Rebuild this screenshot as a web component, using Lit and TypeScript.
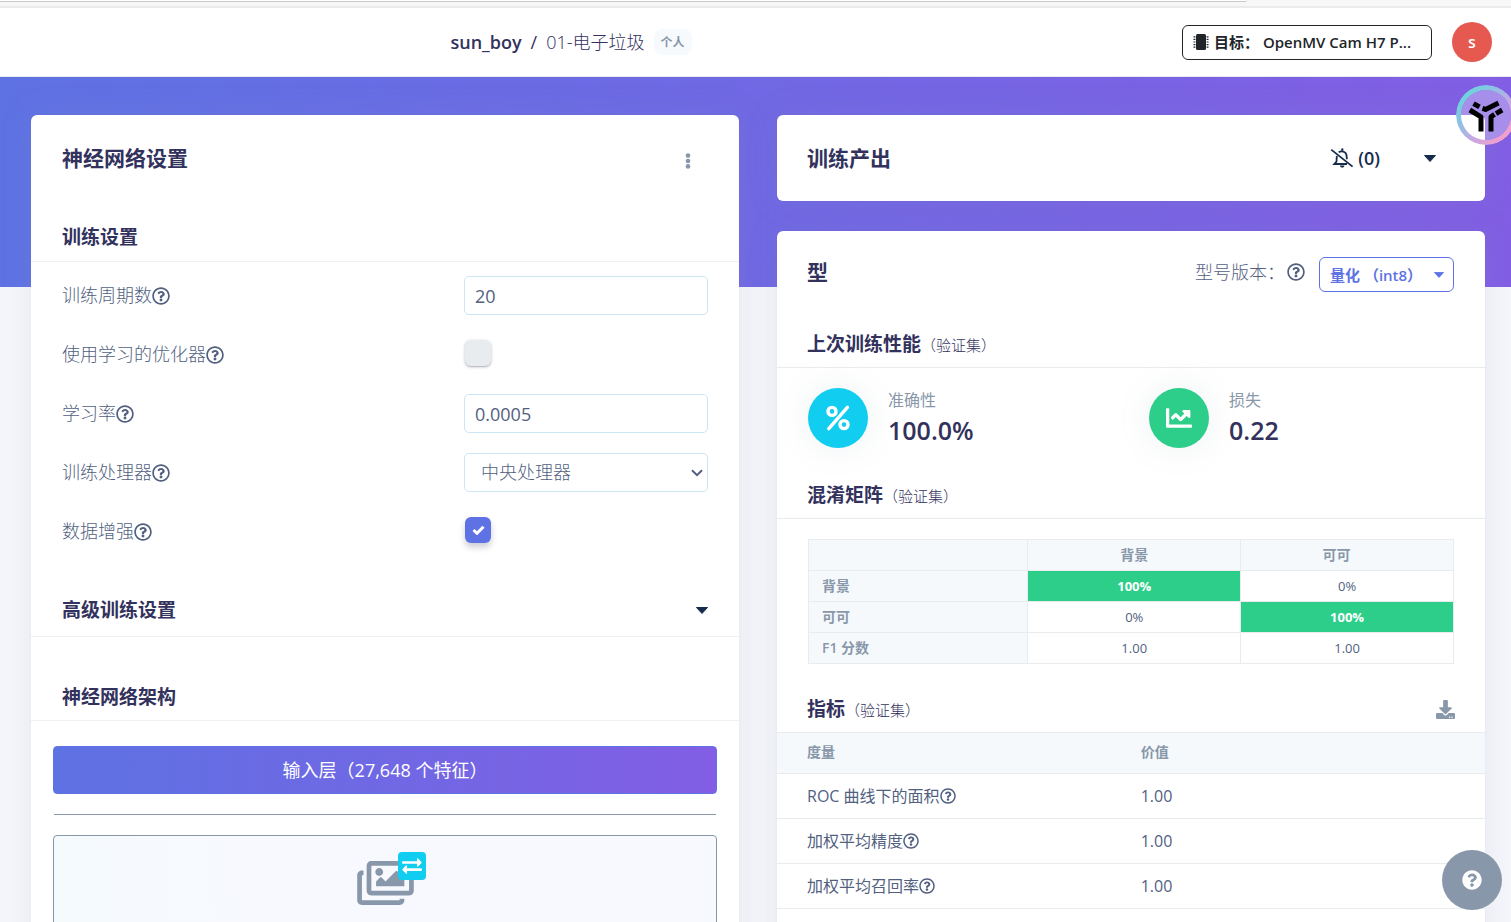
import { LitElement, html, css, svg } from "lit";
import { customElement, property, state } from "lit/decorators.js";

const HELP_PATH =
  "M256 8C119.043 8 8 119.083 8 256c0 136.997 111.043 248 248 248s248-111.003 248-248C504 119.083 392.957 8 256 8zm0 448c-110.532 0-200-89.431-200-200 0-110.495 89.472-200 200-200 110.491 0 200 89.471 200 200 0 110.53-89.431 200-200 200zm107.244-255.2c0 67.052-72.421 68.084-72.421 92.863V300c0 6.627-5.373 12-12 12h-45.647c-6.627 0-12-5.373-12-12v-8.659c0-35.745 27.1-50.034 47.579-61.516 17.561-9.845 28.324-16.541 28.324-29.579 0-17.246-21.999-28.693-39.784-28.693-23.189 0-33.894 10.977-48.942 29.969-4.057 5.12-11.46 6.071-16.666 2.124l-27.824-21.098c-5.107-3.872-6.251-11.066-2.644-16.363C184.846 131.491 214.94 112 261.794 112c49.071 0 101.45 38.304 101.45 88.8zM298 368c0 23.159-18.841 42-42 42s-42-18.841-42-42 18.841-42 42-42 42 18.841 42 42z";

const icons: Record<string, { box: string; body: unknown }> = {
  help: { box: "0 0 512 512", body: svg`<path d=${HELP_PATH} />` },
  helpSolid: {
    box: "0 0 512 512",
    body: svg`<path d="M504 256c0 136.997-111.043 248-248 248S8 392.997 8 256C8 119.083 119.043 8 256 8s248 111.083 248 248zM262.655 90c-54.497 0-89.255 22.957-116.549 63.758-3.536 5.286-2.353 12.415 2.715 16.258l34.699 26.31c5.205 3.947 12.621 3.008 16.665-2.122 17.864-22.658 30.113-35.797 57.303-35.797 20.429 0 45.698 13.148 45.698 32.958 0 14.976-12.363 22.667-32.534 33.976C247.128 238.528 216 254.941 216 296v4c0 6.627 5.373 12 12 12h56c6.627 0 12-5.373 12-12v-1.333c0-28.462 83.186-29.647 83.186-106.667 0-58.002-60.165-102-116.531-102zM256 338c-25.365 0-46 20.635-46 46 0 25.364 20.635 46 46 46s46-20.636 46-46c0-25.365-20.635-46-46-46z" />`,
  },
  images: {
    box: "0 32 576 448",
    body: svg`<path d="M480 416v16c0 26.51-21.49 48-48 48H48c-26.51 0-48-21.49-48-48V176c0-26.51 21.49-48 48-48h16v48H54a6 6 0 0 0-6 6v244a6 6 0 0 0 6 6h372a6 6 0 0 0 6-6v-10h48zm42-336H150a6 6 0 0 0-6 6v244a6 6 0 0 0 6 6h372a6 6 0 0 0 6-6V86a6 6 0 0 0-6-6zm6-48c26.51 0 48 21.49 48 48v256c0 26.51-21.49 48-48 48H144c-26.51 0-48-21.49-48-48V80c0-26.51 21.49-48 48-48h384zM264 144c0 22.091-17.909 40-40 40s-40-17.909-40-40 17.909-40 40-40 40 17.909 40 40zm-72 96l39.515-39.515c4.686-4.686 12.284-4.686 16.971 0L288 240l103.515-103.515c4.686-4.686 12.284-4.686 16.971 0L480 208v80H192v-48z" />`,
  },
  chart: {
    box: "0 0 512 512",
    body: svg`<path d="M496 384H64V80c0-8.84-7.16-16-16-16H16C7.16 64 0 71.16 0 80v336c0 17.67 14.33 32 32 32h464c8.84 0 16-7.16 16-16v-32c0-8.84-7.16-16-16-16zM464 96H345.94c-21.38 0-32.09 25.85-16.97 40.97l32.4 32.4L288 242.75l-73.37-73.37c-12.5-12.5-32.76-12.5-45.25 0l-68.69 68.69c-6.25 6.25-6.25 16.38 0 22.63l22.62 22.62c6.25 6.25 16.38 6.25 22.63 0L192 237.25l73.37 73.37c12.5 12.5 32.76 12.5 45.25 0l96-96 32.4 32.4c15.12 15.12 40.97 4.41 40.97-16.97V112c.01-8.84-7.15-16-15.99-16z" />`,
  },
  download: {
    box: "0 0 512 512",
    body: svg`<path d="M216 0h80c13.3 0 24 10.7 24 24v168h87.7c17.8 0 26.7 21.5 14.1 34.1L269.7 378.3c-7.5 7.5-19.8 7.5-27.3 0L90.1 226.1c-12.6-12.6-3.7-34.1 14.1-34.1H192V24c0-13.3 10.7-24 24-24zm296 376v112c0 13.3-10.7 24-24 24H24c-13.3 0-24-10.7-24-24V376c0-13.3 10.7-24 24-24h146.7l49 49c20.1 20.1 52.5 20.1 72.6 0l49-49H488c13.3 0 24 10.7 24 24zm-124 88c0-11-9-20-20-20s-20 9-20 20 9 20 20 20 20-9 20-20zm64 0c0-11-9-20-20-20s-20 9-20 20 9 20 20 20 20-9 20-20z" />`,
  },
  percent: {
    box: "0 0 24 26",
    body: svg`<g fill="none" stroke="currentColor" stroke-width="3.4" stroke-linecap="round"><path d="M21.4 2.4L2.8 23.6" /><circle cx="6" cy="6.4" r="4" /><circle cx="18" cy="19.6" r="4" /></g>`,
  },
  chip: {
    box: "0 0 16 16",
    body: svg`<rect x="3" y="0" width="10" height="16" rx="1.5" /><g stroke="currentColor" stroke-width="1.2"><path d="M.5 2.9H2.4M.5 5.4H2.4M.5 8H2.4M.5 10.6H2.4M.5 13.1H2.4M13.6 2.9h1.9M13.6 5.4h1.9M13.6 8h1.9M13.6 10.6h1.9M13.6 13.1h1.9" /></g>`,
  },
  bellOff: {
    box: "0 0 24 20",
    body: svg`<g fill="none" stroke="currentColor" stroke-width="1.8"><path d="M1.2 1.6L22.6 18.6" /><path d="M8.8 4.4C10.200 2.900 14 2.700 15.800 5.200c1.200 1.900 1 4.200 1 6" /><path d="M6.900 8c-.4 2-.2 3.800-.4 5.600L4.300 16H17" /></g><path d="M11.200 1.300a1.100 1.100 0 0 1 2.200 0v1.500h-2.200zM9.900 17.600h4.600a2.300 2.100 0 0 1-4.600 0z" />`,
  },
  dots: {
    box: "0 0 6 18",
    body: svg`<circle cx="3" cy="3.600" r="2.300" /><circle cx="3" cy="9" r="2.300" /><circle cx="3" cy="14.400" r="2.300" />`,
  },
  caret: { box: "0 0 12 7", body: svg`<path d="M.5.500h11L6 6.500z" stroke="currentColor" stroke-linejoin="round" />` },
  swap: {
    box: "0 0 20 16",
    body: svg`<path d="M1 3.200h14V.900q0-1.200 1-.4l3.400 3.500q.6.600 0 1.200L16 8.500q-1 .8-1-.4V5.800H1q-1 0-1-1V4.200q0-1 1-1zM19 10.300H5V8q0-1.200-1-.4L.6 11.100q-.6.600 0 1.200L4 15.600q1 .8 1-.4v-2.300h14q1 0 1-1v-.6q0-1-1-1z" />`,
  },
  tri: {
    box: "0 0 36 34",
    body: svg`<g fill="none" stroke="currentColor" stroke-width="5" stroke-linejoin="round"><path d="M5.500 5.600L11.500 8.900" /><path d="M14.500 10.400L17.500 11.400 30.500 5" /><path d="M1.800 12L13 18.800V33.400" /><path d="M34.200 12L28 15.600" /><path d="M26.500 16.400L23 18.800V33.400" /></g>`,
  },
};

@customElement("ui-icon")
export class UiIcon extends LitElement {
  @property() name = "help";
  static styles = css`
    :host { display: inline-flex; width: 18px; height: 18px; flex: none; }
    svg { width: 100%; height: 100%; fill: currentColor; display: block; overflow: visible; }
  `;
  render() {
    const icon = icons[this.name];
    return html`<svg viewBox=${icon.box} aria-hidden="true">${icon.body}</svg>`;
  }
}

const shared = css`
  * { box-sizing: border-box; }
  button, input, select { font: inherit; color: inherit; margin: 0; }
  button { cursor: pointer; background: none; border: 0; padding: 0; }
  h2, h3 { margin: 0; color: #32325d; font-weight: 700; }
  h2 { font-size: 21px; line-height: 30px; }
  h3 { font-size: 19px; line-height: 26px; }
  .card {
    background: #fff;
    border-radius: 6px;
    box-shadow: 0 0 32px rgba(136, 152, 170, 0.15), 0 0 1px rgba(0, 0, 0, 0.15);
  }
  .caret { width: 12px; height: 7px; color: #172b4d; }
`;

@customElement("network-settings")
export class NetworkSettings extends LitElement {
  @state() private augment = true;
  static styles = [
    shared,
    css`
      :host { display: block; }
      .card { min-height: 900px; }
      .head { display: flex; justify-content: space-between; align-items: center; padding: 28px 48px 51px 31px; }
      .menu { color: #8898aa; display: flex; padding-top: 6px; }
      .menu ui-icon { width: 6px; height: 18px; }
      .section { display: flex; justify-content: space-between; align-items: center; padding: 0 31px 11px; border-bottom: 1px solid #f0f0f1; }
      .form { display: grid; gap: 20px; padding: 14px 31px 46px; }
      .row { display: grid; grid-template-columns: 402px minmax(0, 1fr); align-items: center; min-height: 39px; }
      .row label { display: flex; align-items: center; font-weight: 300; }
      .text, .select {
        width: 100%; height: 39px; border: 1px solid #cbe6f5; border-radius: 5px; padding: 0 10px; background-color: #fff; outline: none;
      }
      .select {
        appearance: none; font-weight: 300; padding: 0 28px 0 16px;
        background-image: url("data:image/svg+xml,%3Csvg xmlns='http://www.w3.org/2000/svg' width='12' height='8'%3E%3Cpath d='M1 1.200l5 5 5-5' fill='none' stroke='%23525f7f' stroke-width='2'/%3E%3C/svg%3E");
        background-repeat: no-repeat; background-position: right 4px center;
      }
      .box {
        appearance: none; width: 26px; height: 26px; border-radius: 6px; margin: 0 0 4px 1px; background: #e9ecef center no-repeat;
        box-shadow: 0 1px 3px rgba(50, 50, 93, 0.35), 0 1px 0 rgba(0, 0, 0, 0.08);
      }
      .box:checked {
        background-color: #5e72e4; box-shadow: 0 4px 6px rgba(50, 50, 93, 0.25);
        background-image: url("data:image/svg+xml,%3Csvg xmlns='http://www.w3.org/2000/svg' width='13' height='10'%3E%3Cpath d='M1.500 5l3.500 3.300 6.500-6.600' fill='none' stroke='white' stroke-width='3'/%3E%3C/svg%3E");
      }
      .advanced { padding-bottom: 13px; }
      .arch { padding-top: 47px; padding-bottom: 10px; }
      .layers { padding: 25px 22px; display: grid; gap: 20px; }
      .input-layer {
        height: 48px; border-radius: 4px; color: #fff; border: 1px solid #5e72e4;
        background: linear-gradient(87deg, #5e72e4, #825ee4);
      }
      .rule { height: 1px; margin: 0 1px; background: #8898aa; }
      .layer {
        min-height: 120px; border: 1px solid #8898aa; border-radius: 4px; background: linear-gradient(87deg, #f5fafd, #f7f9fe 30%);
        display: flex; justify-content: center; align-items: flex-start; padding-top: 25px;
      }
      .pic { position: relative; display: flex; color: #8898aa; }
      .pic > ui-icon { width: 57px; height: 44px; }
      .badge {
        position: absolute; top: -9px; right: -12px; width: 28px; height: 28px; border-radius: 4px; background: #11cdef; color: #fff;
        display: flex; align-items: center; justify-content: center;
      }
      .badge ui-icon { width: 20px; height: 16px; }
    `,
  ];
  render() {
    return html`
      <section class="card">
        <div class="head">
          <h2>神经网络设置</h2>
          <button class="menu" aria-label="更多"><ui-icon name="dots"></ui-icon></button>
        </div>
        <div class="section"><h3>训练设置</h3></div>
        <div class="form">
          <div class="row"><label for="cycles">训练周期数<ui-icon></ui-icon></label><input class="text" id="cycles" type="text" value="20" /></div>
          <div class="row"><label for="optimizer">使用学习的优化器<ui-icon></ui-icon></label><input class="box" id="optimizer" type="checkbox" /></div>
          <div class="row"><label for="rate">学习率<ui-icon></ui-icon></label><input class="text" id="rate" type="text" value="0.0005" /></div>
          <div class="row">
            <label for="cpu">训练处理器<ui-icon></ui-icon></label>
            <select class="select" id="cpu"><option>中央处理器</option></select>
          </div>
          <div class="row">
            <label for="augment">数据增强<ui-icon></ui-icon></label>
            <input class="box" id="augment" type="checkbox" .checked=${this.augment}
              @change=${(e: Event) => (this.augment = (e.target as HTMLInputElement).checked)} />
          </div>
        </div>
        <div class="section advanced"><h3>高级训练设置</h3><ui-icon class="caret" name="caret"></ui-icon></div>
        <div class="section arch"><h3>神经网络架构</h3></div>
        <div class="layers">
          <button class="input-layer">输入层（27,648 个特征）</button>
          <div class="rule"></div>
          <div class="layer">
            <div class="pic"><ui-icon name="images"></ui-icon><span class="badge"><ui-icon name="swap"></ui-icon></span></div>
          </div>
        </div>
      </section>
    `;
  }
}

@customElement("training-output")
export class TrainingOutput extends LitElement {
  private matrix = [
    { name: "背景", cells: ["100%", "0%"] },
    { name: "可可", cells: ["0%", "100%"] },
    { name: "F1 分数", cells: ["1.00", "1.00"] },
  ];
  private metrics = [
    { name: "ROC 曲线下的面积", value: "1.00" },
    { name: "加权平均精度", value: "1.00" },
    { name: "加权平均召回率", value: "1.00" },
  ];
  static styles = [
    shared,
    css`
      :host { display: grid; gap: 30px; grid-template-rows: auto 1fr; }
      .output { display: flex; align-items: center; justify-content: space-between; padding: 28px 49px 28px 30px; }
      .tools { display: flex; align-items: center; gap: 44px; color: #172b4d; }
      .bell { display: flex; align-items: center; gap: 4px; font-weight: 600; font-size: 18px; }
      .bell ui-icon { width: 24px; height: 20px; }
      .head { display: flex; justify-content: space-between; align-items: flex-start; padding: 26px 31px 39px 30px; }
      .version { display: flex; align-items: flex-start; font-weight: 300; line-height: 30px; }
      .version > ui-icon { margin: 6px 0 0 2px; }
      .pick {
        display: flex; align-items: center; justify-content: space-between; width: 135px; height: 35px; margin-left: 14px; padding: 0 9px 0 10px;
        border: 1px solid #5e72e4; border-radius: 6px; color: #5e72e4; font-size: 15px; font-weight: 600;
      }
      .pick .caret { color: #5e72e4; width: 10px; height: 6px; }
      .section { display: flex; align-items: center; justify-content: space-between; padding: 0 32px 9px 30px; margin-right: -2px; border-bottom: 1px solid #e9ecef; }
      .section small { font-size: 15px; font-weight: 300; }
      .stats { display: grid; grid-template-columns: 1fr 1fr; gap: 36px; padding: 20px 31px 34px; }
      .stat { display: flex; align-items: center; gap: 20px; }
      .disc {
        width: 60px; height: 60px; border-radius: 50%; display: flex; align-items: center; justify-content: center; color: #fff;
        box-shadow: 0 0 32px rgba(136, 152, 170, 0.15);
      }
      .cyan { background: #11cdef; }
      .green { background: #2dce89; }
      .cyan ui-icon { width: 24px; height: 26px; }
      .green ui-icon { width: 26px; height: 26px; }
      .name { color: #8898aa; font-size: 16px; line-height: 24px; font-weight: 400; }
      .value { color: #32325d; font-size: 25px; line-height: 36px; font-weight: 600; }
      .matrix { padding: 20px 31px 32px; }
      table { width: 100%; border-collapse: collapse; table-layout: fixed; }
      .matrix table { font-size: 13px; line-height: 18px; text-align: center; }
      .matrix th, .matrix td { border: 1px solid #e9ecef; padding: 6px 13px; height: 31px; }
      .matrix col.first { width: 34%; }
      th { background: #f6f9fc; color: #8898aa; font-weight: 600; font-size: 14px; }
      .matrix tbody th { text-align: left; }
      .matrix thead th:last-child { padding-right: 34px; }
      .matrix td.hit { background: #2dce89; color: #fff; font-weight: 700; }
      .dl { color: #8898aa; display: flex; }
      .dl ui-icon { width: 19px; height: 19px; }
      .metrics { text-align: left; font-size: 16px; line-height: 24px; }
      .metrics col.first { width: 46%; }
      .metrics th { padding: 7px 0 9px; font-size: 14px; }
      .metrics td { padding: 10px 0; }
      .metrics th, .metrics td { border-bottom: 1px solid #e9ecef; }
      .metrics th:first-child, .metrics td:first-child { padding-left: 30px; }
      .metrics th:last-child, .metrics td:last-child { padding-left: 38px; }
      .term { display: flex; align-items: center; }
      .term ui-icon { width: 16px; height: 16px; }
    `,
  ];
  render() {
    return html`
      <section class="card output">
        <h2>训练产出</h2>
        <div class="tools">
          <button class="bell"><ui-icon name="bellOff"></ui-icon>(0)</button>
          <ui-icon class="caret" name="caret"></ui-icon>
        </div>
      </section>
      <section class="card">
        <div class="head">
          <h2>型</h2>
          <div class="version">
            型号版本：<ui-icon></ui-icon>
            <button class="pick">量化 （int8）<ui-icon class="caret" name="caret"></ui-icon></button>
          </div>
        </div>
        <div class="section"><h3>上次训练性能<small>（验证集）</small></h3></div>
        <div class="stats">
          <div class="stat">
            <span class="disc cyan"><ui-icon name="percent"></ui-icon></span>
            <div><div class="name">准确性</div><div class="value">100.0%</div></div>
          </div>
          <div class="stat">
            <span class="disc green"><ui-icon name="chart"></ui-icon></span>
            <div><div class="name">损失</div><div class="value">0.22</div></div>
          </div>
        </div>
        <div class="section"><h3>混淆矩阵<small>（验证集）</small></h3></div>
        <div class="matrix">
          <table>
            <colgroup><col class="first" /><col /><col /></colgroup>
            <thead><tr><th></th><th scope="col">背景</th><th scope="col">可可</th></tr></thead>
            <tbody>
              ${this.matrix.map(
                (r) => html`<tr>
                  <th scope="row">${r.name}</th>
                  ${r.cells.map((c) => html`<td class=${c === "100%" ? "hit" : ""}>${c}</td>`)}
                </tr>`
              )}
            </tbody>
          </table>
        </div>
        <div class="section">
          <h3>指标<small>（验证集）</small></h3>
          <button class="dl" aria-label="下载"><ui-icon name="download"></ui-icon></button>
        </div>
        <table class="metrics">
          <colgroup><col class="first" /><col /></colgroup>
          <thead><tr><th scope="col">度量</th><th scope="col">价值</th></tr></thead>
          <tbody>
            ${this.metrics.map(
              (m) => html`<tr><td><span class="term">${m.name}<ui-icon></ui-icon></span></td><td>${m.value}</td></tr>`
            )}
          </tbody>
        </table>
      </section>
    `;
  }
}

@customElement("app-root")
export class AppRoot extends LitElement {
  static styles = [
    shared,
    css`
      :host {
        display: flex; flex-direction: column; height: 100vh; position: relative; overflow: hidden;
        font-family: "Open Sans", "Noto Sans CJK SC", sans-serif; font-size: 18px; line-height: 27px; color: #525f7f; background: #f5f6fb;
      }
      .strip { flex: none; height: 8px; background: #f7f7f7; border-bottom: 2px solid #ebebeb; }
      .tab { width: 1247px; max-width: 83%; height: 2px; border-bottom: 1px solid #c8cbc9; border-bottom-right-radius: 6px; background: #fff; }
      header { flex: none; display: flex; align-items: center; gap: 40px; height: 69px; padding: 0 19px 0 0; background: #fff; border-bottom: 1px solid #e9ecef; }
      .crumbs { flex: 1; display: flex; align-items: center; justify-content: center; gap: 9px; color: #32325d; }
      .crumbs a { color: inherit; text-decoration: none; font-weight: 600; }
      .crumbs .project { font-weight: 300; }
      .tag { background: #f7fafc; color: #8898aa; font-size: 12px; line-height: 18px; font-weight: 600; border-radius: 8px; padding: 5px 7px 3px; }
      .account { display: flex; align-items: center; gap: 20px; }
      .target {
        display: flex; align-items: center; gap: 5px; width: 250px; height: 35px; padding: 0 12px 0 10px; border: 1px solid #212529; border-radius: 6px;
        color: #212529; font-size: 15px; font-weight: 600;
      }
      .target ui-icon { width: 16px; height: 16px; }
      .target span { flex: 1; min-width: 0; text-align: left; overflow: hidden; text-overflow: ellipsis; white-space: nowrap; }
      .avatar { width: 40px; height: 40px; border-radius: 50%; background: #e55951; color: #fff; font-size: 16px; font-weight: 600; }
      .scroll { flex: 1; min-height: 0; overflow-y: auto; scrollbar-width: none; }
      main {
        display: grid; grid-template-columns: minmax(0, 1fr) minmax(0, 1fr); gap: 38px; padding: 38px 26px 38px 31px;
        background: linear-gradient(87deg, #5e72e4, #825ee4) no-repeat 0 0 / 100% 210px;
      }
      .assistant {
        position: absolute; top: 85px; right: -5px; width: 60px; height: 60px; border-radius: 50%; color: #000; display: flex; align-items: center; justify-content: center;
        border: 5px solid transparent;
        background: linear-gradient(#ffffff4d, #ffffff4d) padding-box;
      }
      .ring { position: absolute; inset: -5px; border-radius: 50%; padding: 5px;
        background: linear-gradient(135deg, #6fd3dc 15%, #8fc0e4 35%, #c9a8e2 60%, #f49fcb 85%);
        mask: linear-gradient(#000 0 0) content-box exclude, linear-gradient(#000 0 0);
      }
      .assistant ui-icon { width: 36px; height: 34px; }
      .help { position: absolute; right: 9px; bottom: 12px; width: 60px; height: 60px; border-radius: 50%; background: #8898aa; color: #fff; display: flex; align-items: center; justify-content: center; }
      .help ui-icon { width: 20px; height: 20px; }
    `,
  ];
  render() {
    return html`
      <div class="strip"><div class="tab"></div></div>
      <header>
        <nav class="crumbs">
          <a href="#">sun_boy</a><span>/</span><span class="project">01-电子垃圾</span><span class="tag">个人</span>
        </nav>
        <div class="account">
          <button class="target"><ui-icon name="chip"></ui-icon><span>目标： OpenMV Cam H7 P...</span></button>
          <button class="avatar">s</button>
        </div>
      </header>
      <div class="scroll">
        <main>
          <network-settings></network-settings>
          <training-output></training-output>
        </main>
      </div>
      <button class="assistant" aria-label="助手"><span class="ring"></span><ui-icon name="tri"></ui-icon></button>
      <button class="help" aria-label="帮助"><ui-icon name="helpSolid"></ui-icon></button>
    `;
  }
}
